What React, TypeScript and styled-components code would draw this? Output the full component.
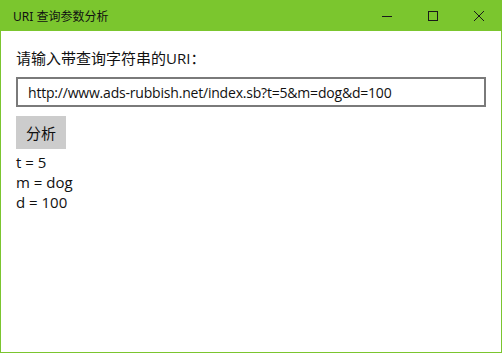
import React from "react";
import styled, { createGlobalStyle } from "styled-components";

const GlobalStyle = createGlobalStyle`
  html, body {
    margin: 0;
    padding: 0;
    background: #ffffff;
  }
  body {
    font-family: "Open Sans", "Noto Sans", "Noto Sans CJK SC", sans-serif;
  }
`;

const Frame = styled.div`
  width: 502px;
  height: 353px;
  box-sizing: border-box;
  display: flex;
  flex-direction: column;
  border: 1px solid #7bc52f;
  border-top: none;
  background: #ffffff;
`;

const TitleBar = styled.div`
  height: 31px;
  margin: 0 -1px;
  background: #7bc62e;
  display: flex;
  align-items: center;
  justify-content: space-between;
  flex-shrink: 0;
`;

const Title = styled.span`
  padding-left: 13px;
  font-size: 12px;
  color: #111;
  font-family: "Noto Sans", "Noto Sans CJK SC", sans-serif;
`;

const Controls = styled.div`
  display: flex;
  height: 100%;
`;

const CtrlButton = styled.div`
  width: 46px;
  height: 100%;
  display: flex;
  align-items: center;
  justify-content: center;
`;

const Content = styled.div`
  padding: 14px 15px 0 15px;
  display: flex;
  flex-direction: column;
  align-items: flex-start;
`;

const Label = styled.div`
  font-size: 15px;
  color: #111;
  line-height: 26px;
`;

const UriInput = styled.div`
  margin-top: 6px;
  width: 470px;
  height: 30px;
  box-sizing: border-box;
  border: 2px solid #7a7a7a;
  padding: 0 10px;
  display: flex;
  align-items: center;
  font-size: 14px;
  letter-spacing: -0.2px;
  color: #111;
  white-space: nowrap;
  overflow: hidden;
`;

const ActionButton = styled.div`
  margin-top: 9px;
  width: 50px;
  height: 33px;
  background: #cccccc;
  display: flex;
  align-items: center;
  justify-content: center;
  font-size: 15px;
  color: #111;
`;

const Results = styled.div`
  margin-top: 3px;
  font-size: 15px;
  line-height: 20px;
  color: #111;
`;

const Line = styled.div``;

export default function App() {
  const params = ["t = 5", "m = dog", "d = 100"];
  return (
    <>
      <GlobalStyle />
      <Frame>
        <TitleBar>
          <Title>URI 查询参数分析</Title>
          <Controls>
            <CtrlButton>
              <svg width="10" height="10" viewBox="0 0 10 10">
                <path d="M0 5.5h10" stroke="#1a1a1a" strokeWidth="1" />
              </svg>
            </CtrlButton>
            <CtrlButton>
              <svg width="10" height="10" viewBox="0 0 10 10">
                <rect x="0.5" y="0.5" width="9" height="9" fill="none" stroke="#1a1a1a" strokeWidth="1" />
              </svg>
            </CtrlButton>
            <CtrlButton>
              <svg width="10" height="10" viewBox="0 0 10 10">
                <path d="M0 0L10 10M10 0L0 10" stroke="#1a1a1a" strokeWidth="1" />
              </svg>
            </CtrlButton>
          </Controls>
        </TitleBar>
        <Content>
          <Label>请输入带查询字符串的URI：</Label>
          <UriInput>http://www.ads-rubbish.net/index.sb?t=5&amp;m=dog&amp;d=100</UriInput>
          <ActionButton>分析</ActionButton>
          <Results>
            {params.map((p) => (
              <Line key={p}>{p}</Line>
            ))}
          </Results>
        </Content>
      </Frame>
    </>
  );
}
